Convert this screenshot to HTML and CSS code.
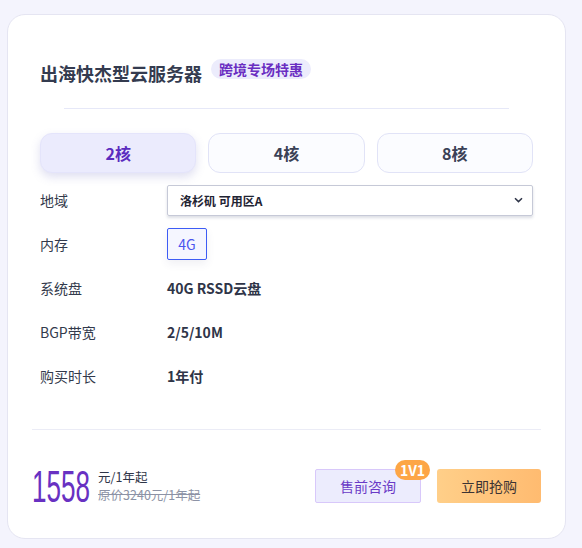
FILE: index.html
```html
<!DOCTYPE html>
<html lang="zh-CN">
<head>
<meta charset="utf-8">
<title>出海快杰型云服务器</title>
<link rel="stylesheet" href="styles.css">
</head>
<body>
<div class="card">
  <div class="top">
    <div class="head">
      <h1 class="title">出海快杰型云服务器</h1>
      <span class="tag">跨境专场特惠</span>
    </div>
    <div class="line"></div>
    <div class="cores">
      <div class="core active">2核</div>
      <div class="core">4核</div>
      <div class="core">8核</div>
    </div>
    <div class="rows">
      <div class="label">地域</div>
      <div class="val">
        <div class="select">
          <span>洛杉矶 可用区A</span>
          <svg class="chev" width="9" height="6" viewBox="0 0 9 6"><path d="M1 1.2 L4.5 4.6 L8 1.2" fill="none" stroke="#2f3548" stroke-width="1.5"/></svg>
        </div>
      </div>
      <div class="label">内存</div>
      <div class="val"><div class="mem">4G</div></div>
      <div class="label">系统盘</div>
      <div class="val strong">40G RSSD云盘</div>
      <div class="label">BGP带宽</div>
      <div class="val strong">2/5/10M</div>
      <div class="label">购买时长</div>
      <div class="val strong">1年付</div>
    </div>
  </div>
  <div class="line2"></div>
  <div class="foot">
    <div class="price">
      <span class="num">1558</span>
      <div class="ptext">
        <div class="unit">元/1年起</div>
        <div class="orig">原价3240元/1年起</div>
      </div>
    </div>
    <div class="btns">
      <div class="consult">售前咨询<span class="badge">1V1</span></div>
      <div class="buy">立即抢购</div>
    </div>
  </div>
</div>
</body>
</html>
```
FILE: styles.css
```css
* { box-sizing: border-box; }
html, body { margin: 0; padding: 0; }
body {
  background: #f4f4fd;
  font-family: "Noto Sans CJK SC", "Noto Sans", sans-serif;
  color: #2f3548;
  width: 582px;
  height: 548px;
  overflow: hidden;
  padding-top: 14px;
  padding-left: 7px;
}
.card {
  width: 559px;
  background: #fff;
  border: 1px solid #e5e5f2;
  border-radius: 18px;
  padding: 46px 24px 35px;
}
.top { padding: 0 8px; }
.head { display: flex; align-items: center; height: 24px; }
.title {
  margin: 0;
  font-size: 18px;
  line-height: 24px;
  font-weight: 700;
  color: #343b4f;
}
.tag {
  margin-left: 9px;
  margin-bottom: 8px;
  height: 20px;
  line-height: 20px;
  padding: 0 8px;
  border-radius: 10px;
  background: #ececfc;
  color: #6a2ec2;
  font-size: 14px;
  font-weight: 700;
}
.line { height: 1px; background: #e6e8f8; margin: 23px 24px 0; }
.cores {
  margin-top: 24px;
  display: grid;
  grid-template-columns: repeat(3, 1fr);
  gap: 12px;
}
.core {
  height: 40px;
  border-radius: 12px;
  border: 1px solid #e1e3f7;
  background: #fbfcff;
  display: flex;
  align-items: center;
  justify-content: center;
  font-size: 16px;
  font-weight: 700;
  color: #3a4156;
}
.core.active {
  background: #ebebfd;
  border-color: #e4e4fb;
  color: #5b2cbf;
  box-shadow: 0 4px 10px rgba(110, 110, 190, 0.22);
}
.rows {
  margin-top: 5px;
  display: grid;
  grid-template-columns: 127px 1fr;
  grid-auto-rows: 44px;
  align-items: center;
}
.label { font-size: 14px; color: #333a4c; }
.val { font-size: 14px; }
.strong { font-weight: 700; color: #2f3548; }
.select {
  height: 31px;
  border: 1px solid #c6c9d7;
  border-radius: 2px;
  box-shadow: 0 2px 3px rgba(60, 70, 110, 0.18);
  display: flex;
  align-items: center;
  justify-content: space-between;
  padding: 0 9px 0 12px;
  font-size: 12px;
  font-weight: 700;
  color: #1f2433;
}
.mem {
  width: 40px;
  height: 32px;
  border: 1px solid #3d5cf5;
  border-radius: 2px;
  background: #f5f6ff;
  color: #4a55ee;
  font-size: 14px;
  display: flex;
  align-items: center;
  justify-content: center;
  box-shadow: 0 4px 8px rgba(60, 70, 120, 0.08);
}
.line2 { height: 1px; background: #ebecf6; margin-top: 31px; }
.foot {
  margin-top: 39px;
  display: flex;
  align-items: center;
  justify-content: space-between;
  height: 34px;
}
.price { display: flex; align-items: center; gap: 8px; }
.num {
  display: inline-block;
  font-family: "Liberation Sans", sans-serif;
  font-size: 45px;
  line-height: 34px;
  height: 34px;
  color: #6831c2;
  transform: scaleX(0.58);
  transform-origin: left center;
  margin-right: -42px;
  margin-top: 2px;
}
.ptext { font-size: 12.5px; line-height: 18px; }
.unit { color: #2f3548; }
.orig { color: #8d93a6; text-decoration: line-through; }
.btns { display: flex; gap: 16px; }
.consult {
  position: relative;
  width: 106px;
  height: 34px;
  border: 1px solid #d8c8fa;
  border-radius: 2px;
  background: #ececfd;
  color: #6a3ac6;
  font-size: 14px;
  display: flex;
  align-items: center;
  justify-content: center;
}
.badge {
  position: absolute;
  right: -10px;
  top: -10px;
  width: 35px;
  height: 20px;
  border-radius: 10px;
  background: #fda646;
  color: #fff;
  font-size: 14px;
  font-weight: 700;
  line-height: 20px;
  text-align: center;
}
.buy {
  width: 104px;
  height: 34px;
  border-radius: 3px;
  background: linear-gradient(90deg, #ffcf89, #ffbb70);
  color: #3b3333;
  font-size: 14px;
  display: flex;
  align-items: center;
  justify-content: center;
}
```
